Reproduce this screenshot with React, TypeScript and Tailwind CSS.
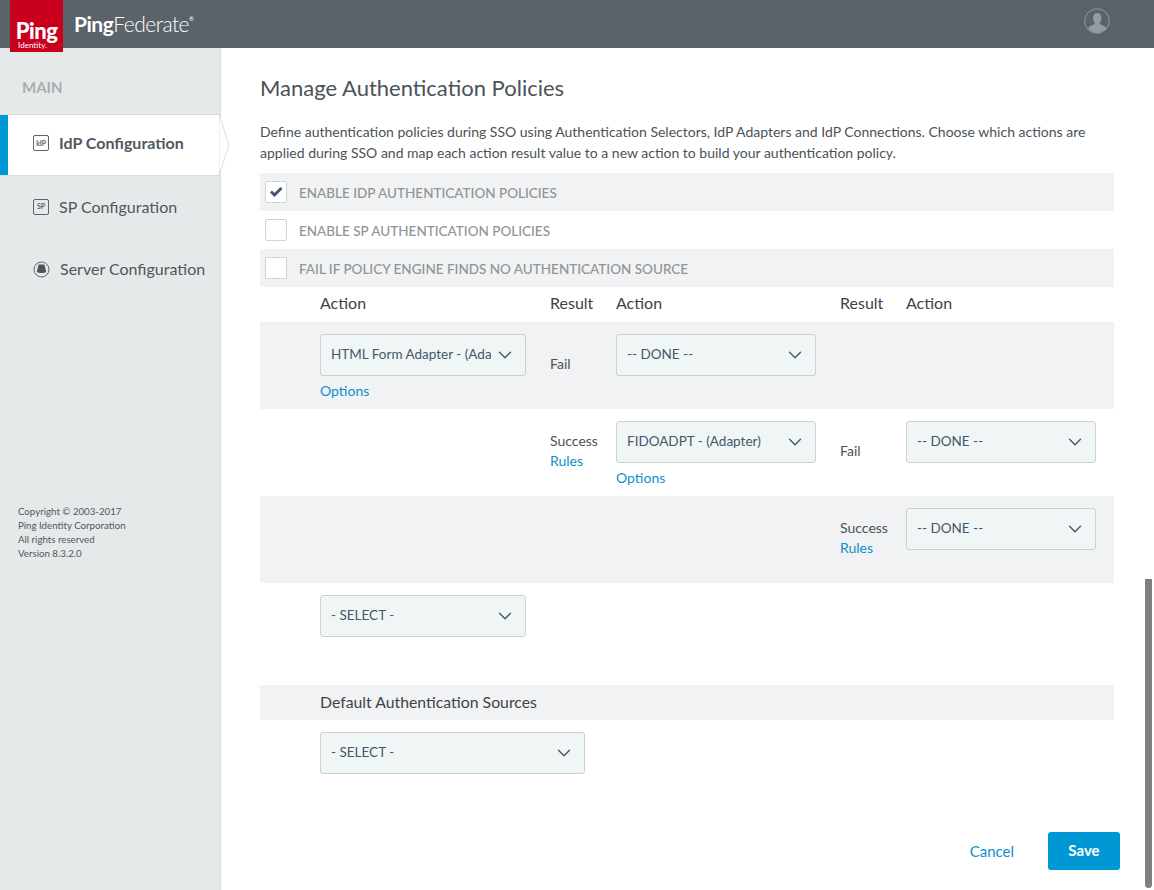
import { ChevronDown } from 'lucide-react'

function IdpIcon({ label }: { label: string }) {
  return (
    <span className="flex h-[16px] w-[16px] items-center justify-center rounded-[2px] border border-[#5c6369] text-[7px] font-bold leading-none text-[#5c6369]">
      {label}
    </span>
  )
}

function ServerIcon() {
  return (
    <svg width="17" height="17" viewBox="0 0 17 17" fill="none">
      <circle cx="8.5" cy="8.5" r="7.5" stroke="#5c6369" strokeWidth="1" />
      <path d="M5.6 3.500h5.800l1.800 7.600c-1 .7-2.700 1-4.700 1s-3.700-.3-4.700-1z" fill="#4d545a" />
    </svg>
  )
}

function Select({ label, width }: { label: string; width: string }) {
  return (
    <div className={`flex h-[42px] items-center justify-between rounded-[3px] border border-[#cbd0d2] bg-[#eff6f5] pl-[10px] pr-[9px] text-[13.5px] text-[#45566b] ${width}`}>
      <span className="max-w-[160px] overflow-hidden whitespace-nowrap pb-[2px]">{label}</span>
      <ChevronDown size={22} strokeWidth={1.5} className="shrink-0 text-[#45566b]" />
    </div>
  )
}

function CheckRow({ label, checked, shaded }: { label: string; checked?: boolean; shaded?: boolean }) {
  return (
    <div className={`flex h-[38px] items-center pl-[5px] ${shaded ? 'bg-[#f1f2f4]' : ''}`}>
      <span className="flex h-[22px] w-[22px] items-center justify-center rounded-[2px] border border-[#cfd3d6] bg-white">
        {checked && (
          <svg width="14" height="12" viewBox="0 0 14 12">
            <path d="M1 6.500l2-2 2.500 2.500L11.500 1l2 2-8 8z" fill="#3f5571" />
          </svg>
        )}
      </span>
      <span className="ml-[12px] pt-[2px] text-[13.5px] font-medium text-[#8f9496]">{label}</span>
    </div>
  )
}

function PolicyRow({ shaded, children }: { shaded?: boolean; children: React.ReactNode }) {
  return (
    <div className={`grid h-[87px] grid-cols-[230px_66px_224px_66px_1fr] pl-[60px] pt-[12px] text-[14px] text-[#4b5258] ${shaded ? 'bg-[#f1f2f4]' : ''}`}>
      {children}
    </div>
  )
}

export default function App() {
  return (
    <div className="relative flex h-[890px] w-[1154px] flex-col overflow-hidden bg-white font-['Lato',sans-serif]">
      {/* Header */}
      <header className="relative flex h-[48px] shrink-0 items-center bg-[#5b636a]">
        <div className="absolute left-[10px] top-0 z-10 flex h-[52px] w-[53px] flex-col items-center justify-end bg-[#c8001e] pb-[3px] text-white">
          <span className="text-[22px] font-black leading-[22px] tracking-[-0.5px]">Ping</span>
          <span className="mr-[8px] mt-[-1px] text-[8px] leading-[8px]">Identity.</span>
        </div>
        <div className="ml-[74px] flex items-baseline text-[21px] tracking-[-0.5px] text-white">
          <span className="font-bold">Ping</span>
          <span className="font-light">Federate</span>
          <span className="self-start pt-[6px] text-[6px]">®</span>
        </div>
        <svg className="absolute right-[44px] top-[8px]" width="26" height="26" viewBox="0 0 26 26" fill="none">
          <circle cx="13" cy="13" r="12.300" stroke="#949ba2" strokeWidth="1" />
          <path d="M13 5c3 0 4.500 2 4.500 5 0 2.200-1 4-2 5 .2 1.300 1.500 1.800 3.500 2.500 2 .8 3 1.600 3.400 2.600A12 12 0 0 1 13 25a12 12 0 0 1-8.900-4.900c.4-1 1.400-1.800 3.400-2.600 2-.7 3.300-1.200 3.500-2.500-1-1-2-2.800-2-5 0-3 1.500-5 4.500-5z" fill="#949ba2" />
        </svg>
      </header>

      <div className="flex flex-1">
        {/* Sidebar */}
        <aside className="w-[221px] shrink-0 border-r border-[#d9dddf] bg-[#e6e9ea]">
          <div className="pl-[22px] pt-[29px] text-[15px] font-bold leading-[20px] text-[#a9aeb1]">MAIN</div>
          <div className="relative mt-[17px] flex h-[62px] items-center border-y border-[#d9dddf] bg-white pb-[4px] pl-[33px] text-[#50575d]">
            <span className="absolute left-0 top-0 h-full w-[8px] bg-[#0098d4]" />
            <IdpIcon label="IdP" />
            <span className="ml-[10px] text-[16px] font-bold">IdP Configuration</span>
            <svg className="absolute left-[219px] top-[-1px]" width="11" height="62" viewBox="0 0 11 62">
              <path d="M0 0 L10 31 L0 61 Z" fill="#ffffff" stroke="#d9dddf" strokeWidth="1" />
            </svg>
          </div>
          <div className="flex h-[61px] items-center pl-[33px] text-[16px] text-[#50575d]">
            <IdpIcon label="SP" />
            <span className="ml-[10px]">SP Configuration</span>
          </div>
          <div className="mt-[1px] flex h-[62px] items-center pl-[33px] text-[16px] text-[#50575d]">
            <ServerIcon />
            <span className="ml-[10px]">Server Configuration</span>
          </div>
          <div className="pl-[18px] pt-[204px] text-[9.7px] leading-[14px] text-[#50575d]">
            <p>Copyright © 2003-2017</p>
            <p>Ping Identity Corporation</p>
            <p>All rights reserved</p>
            <p>Version 8.3.2.0</p>
          </div>
        </aside>

        {/* Main */}
        <main className="flex-1 pl-[39px] pr-[40px]">
          <h1 className="pt-[26px] text-[22px] leading-[28px] text-[#4b5258]">Manage Authentication Policies</h1>
          <p className="mt-[19px] text-[14px] leading-[21px] text-[#4b5258]">
            Define authentication policies during SSO using Authentication Selectors, IdP Adapters and IdP Connections. Choose which actions are applied during SSO and map each action result value to a new action to build your authentication policy.
          </p>
          <div className="mt-[10px]">
            <CheckRow label="ENABLE IDP AUTHENTICATION POLICIES" checked shaded />
            <CheckRow label="ENABLE SP AUTHENTICATION POLICIES" />
            <CheckRow label="FAIL IF POLICY ENGINE FINDS NO AUTHENTICATION SOURCE" shaded />
          </div>

          <div className="grid h-[35px] grid-cols-[230px_66px_224px_66px_1fr] items-center pb-[3px] pl-[60px] text-[16px] text-[#3d4349]">
            <span>Action</span>
            <span>Result</span>
            <span>Action</span>
            <span>Result</span>
            <span>Action</span>
          </div>

          <PolicyRow shaded>
            <div>
              <Select label="HTML Form Adapter - (Adapter)" width="w-[206px]" />
              <a className="mt-[4px] block text-[#0d8fcb]">Options</a>
            </div>
            <div className="pt-[19px]">Fail</div>
            <div><Select label="-- DONE --" width="w-[200px]" /></div>
            <div />
            <div />
          </PolicyRow>

          <PolicyRow>
            <div />
            <div className="pt-[10px] leading-[20px]">
              <p>Success</p>
              <a className="block text-[#0d8fcb]">Rules</a>
            </div>
            <div>
              <Select label="FIDOADPT - (Adapter)" width="w-[200px]" />
              <a className="mt-[4px] block text-[#0d8fcb]">Options</a>
            </div>
            <div className="pt-[19px]">Fail</div>
            <div><Select label="-- DONE --" width="w-[190px]" /></div>
          </PolicyRow>

          <PolicyRow shaded>
            <div />
            <div />
            <div />
            <div className="pt-[10px] leading-[20px]">
              <p>Success</p>
              <a className="block text-[#0d8fcb]">Rules</a>
            </div>
            <div><Select label="-- DONE --" width="w-[190px]" /></div>
          </PolicyRow>

          <div className="pl-[60px] pt-[12px]">
            <Select label="- SELECT -" width="w-[206px]" />
          </div>

          <div className="mt-[48px] flex h-[35px] items-center bg-[#f1f2f4] pb-[2px] pl-[60px] text-[15.8px] text-[#3d4349]">
            Default Authentication Sources
          </div>

          <div className="pl-[60px] pt-[12px]">
            <Select label="- SELECT -" width="w-[265px]" />
          </div>

          <div className="mr-[-6px] mt-[58px] flex items-center justify-end">
            <a className="text-[15px] text-[#0d8fcb]">Cancel</a>
            <button className="ml-[34px] h-[38px] w-[72px] rounded-[3px] bg-[#0098d4] pb-[1px] text-[15px] font-bold text-white">Save</button>
          </div>
        </main>
      </div>

      {/* overlay scrollbar */}
      <div className="absolute left-[1145px] top-[579px] h-[309px] w-[7px] rounded-b-[4px] bg-[#7f7f7f]" />
    </div>
  )
}
